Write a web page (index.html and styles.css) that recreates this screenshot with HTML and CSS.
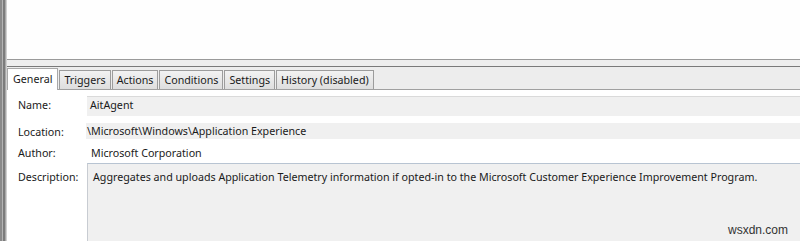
FILE: index.html
```html
<!DOCTYPE html>
<html>
<head>
<meta charset="utf-8">
<link rel="stylesheet" href="styles.css">
</head>
<body>
<div class="frame">
  <div class="edge"></div>
  <div class="main">
    <div class="top-pane"></div>
    <div class="splitter"></div>
    <div class="tabstrip">
      <div class="tab active">General</div>
      <div class="tab">Triggers</div>
      <div class="tab">Actions</div>
      <div class="tab">Conditions</div>
      <div class="tab">Settings</div>
      <div class="tab">History (disabled)</div>
    </div>
    <div class="panel">
      <div class="row row-name">
        <div class="label">Name:</div>
        <div class="field field-name">AitAgent</div>
      </div>
      <div class="row row-location">
        <div class="label">Location:</div>
        <div class="field field-location">\Microsoft\Windows\Application Experience</div>
      </div>
      <div class="row row-author">
        <div class="label">Author:</div>
        <div class="field field-author">Microsoft Corporation</div>
      </div>
      <div class="row row-desc">
        <div class="label">Description:</div>
        <div class="field field-desc">Aggregates and uploads Application Telemetry information if opted-in to the Microsoft Customer Experience Improvement Program.
          <span class="watermark">wsxdn.com</span>
        </div>
      </div>
    </div>
  </div>
</div>
</body>
</html>
```

FILE: styles.css
```css
html, body {
  margin: 0;
  padding: 0;
  background: #ffffff;
}
body {
  font-family: "Noto Sans", "Open Sans", sans-serif;
  font-size: 10.7px;
  color: #1a1a1a;
  width: 800px;
  height: 241px;
  overflow: hidden;
}
.frame {
  display: flex;
  height: 241px;
}
.edge {
  width: 7px;
  flex: none;
  background: linear-gradient(to right, #8a8a8a 0, #8a8a8a 2px, #b4b4b4 2px, #b4b4b4 3px, #7c7c7c 3px, #7c7c7c 5px, #a8a8a8 5px, #a8a8a8 6px, #d0d0d0 6px, #d0d0d0 7px);
}
.main {
  flex: 1;
  display: flex;
  flex-direction: column;
  min-width: 0;
}
.top-pane {
  height: 59px;
  background: #fefefe;
  border-bottom: 1px solid #9a9a9a;
}
.splitter {
  height: 6px;
  background: #eeeeee;
  border-bottom: 1px solid #7a7a7a;
}
.tabstrip {
  height: 22px;
  background: #ededed;
  border-bottom: 1px solid #a0a0a0;
  display: flex;
  align-items: flex-end;
  padding-left: 0;
}
.tab {
  height: 18px;
  line-height: 18px;
  padding: 0 4px;
  margin-right: 1px;
  border: 1px solid #9c9c9c;
  border-bottom: none;
  background: linear-gradient(#f2f2f2, #dedede);
  color: #1a1a1a;
  white-space: nowrap;
}
.tab.active {
  background: #ffffff;
  height: 21px;
  line-height: 20px;
  margin-bottom: -1px;
  padding: 0 5px 0 5px;
  border-color: #a8a8a8;
}
.panel {
  flex: 1;
  display: flex;
  flex-direction: column;
  padding-top: 6px;
}
.row {
  display: flex;
  align-items: stretch;
}
.label {
  width: 69px;
  padding-left: 11px;
  flex: none;
  display: flex;
  align-items: center;
}
.field {
  flex: 1;
  display: flex;
  align-items: center;
  white-space: nowrap;
}
.row-name {
  height: 20px;
}
.row-name .label {
  padding-bottom: 3px;
}
.field-name {
  background: #f0f0f0;
  border-top: 1px solid #dadada;
  padding-left: 3px;
  padding-bottom: 3px;
}
.row-location {
  margin-top: 7px;
  height: 16px;
}
.row-location .label {
  padding-top: 1px;
}
.field-location {
  background: #f0f0f0;
  margin-left: -1px;
  padding-left: 1px;
}
.row-author {
  height: 24px;
}
.row-author .label,
.field-author {
  padding-top: 3px;
}
.field-author {
  padding-left: 4px;
}
.row-desc {
  flex: 1;
  align-items: flex-start;
}
.row-desc .label {
  height: 24px;
  padding-top: 2px;
}
.field-desc {
  align-self: stretch;
  align-items: flex-start;
  background: #f0f0f0;
  border-top: 1px solid #b8c4d2;
  border-left: 1px solid #c8ccd2;
  padding: 6px 0 0 5px;
  position: relative;
}
.watermark {
  position: absolute;
  right: 12px;
  bottom: 4px;
  font-family: "Liberation Sans", Arial, sans-serif;
  font-size: 12px;
  color: #333333;
}
```
